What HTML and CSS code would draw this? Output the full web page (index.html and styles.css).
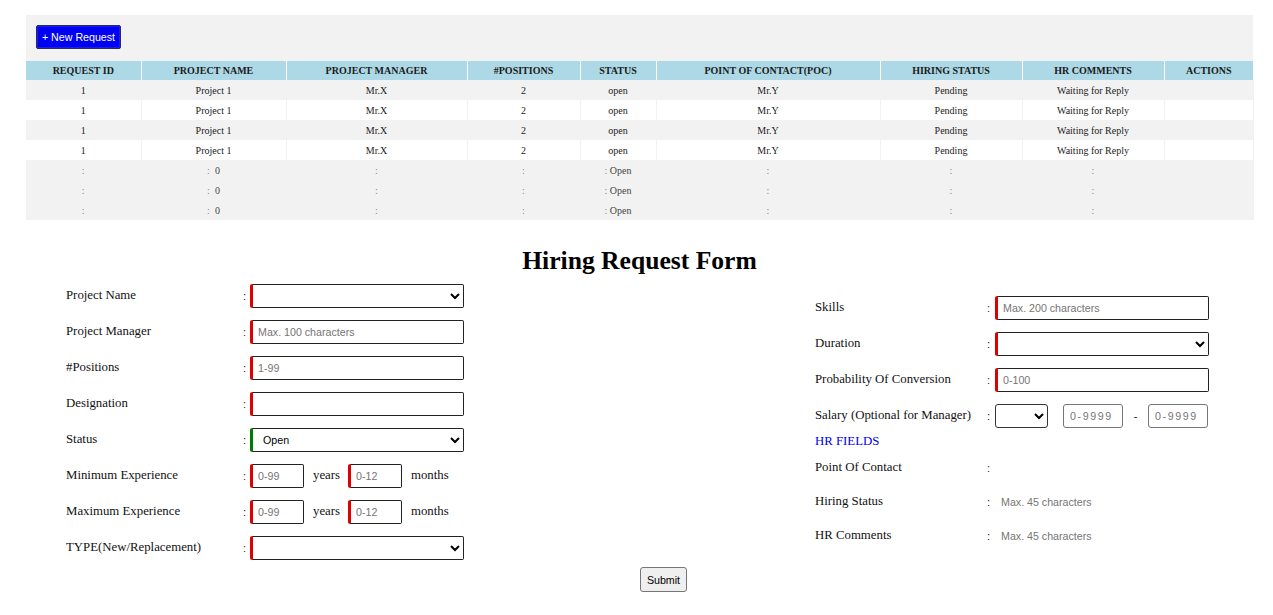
FILE: index.html
```html
<!DOCTYPE html>
<html>
<head>
<meta charset="utf-8">
<title>Hiring Request</title>
<link rel="stylesheet" href="styles.css">
</head>
<body>
<div class="page">
  <section class="panel">
    <button class="new-btn" type="button">+ New Request</button>
    <table class="grid">
      <colgroup>
        <col style="width:115px"><col style="width:145px"><col style="width:181px"><col style="width:113px"><col style="width:76px"><col style="width:224px"><col style="width:142px"><col style="width:142px"><col style="width:89px">
      </colgroup>
      <thead>
        <tr><th>REQUEST ID</th><th>PROJECT NAME</th><th>PROJECT MANAGER</th><th>#POSITIONS</th><th>STATUS</th><th>POINT OF CONTACT(POC)</th><th>HIRING STATUS</th><th>HR COMMENTS</th><th>ACTIONS</th></tr>
      </thead>
      <tbody>
        <tr><td>1</td><td>Project 1</td><td>Mr.X</td><td>2</td><td>open</td><td>Mr.Y</td><td>Pending</td><td>Waiting for Reply</td><td></td></tr>
        <tr><td>1</td><td>Project 1</td><td>Mr.X</td><td>2</td><td>open</td><td>Mr.Y</td><td>Pending</td><td>Waiting for Reply</td><td></td></tr>
        <tr><td>1</td><td>Project 1</td><td>Mr.X</td><td>2</td><td>open</td><td>Mr.Y</td><td>Pending</td><td>Waiting for Reply</td><td></td></tr>
        <tr><td>1</td><td>Project 1</td><td>Mr.X</td><td>2</td><td>open</td><td>Mr.Y</td><td>Pending</td><td>Waiting for Reply</td><td></td></tr>
        <tr class="tpl"><td><span class="c">:</span></td><td><span class="c">:</span>&nbsp; 0</td><td><span class="c">:</span></td><td><span class="c">:</span></td><td><span class="c">:</span> Open</td><td><span class="c">:</span></td><td><span class="c">:</span></td><td><span class="c">:</span></td><td></td></tr>
        <tr class="tpl"><td><span class="c">:</span></td><td><span class="c">:</span>&nbsp; 0</td><td><span class="c">:</span></td><td><span class="c">:</span></td><td><span class="c">:</span> Open</td><td><span class="c">:</span></td><td><span class="c">:</span></td><td><span class="c">:</span></td><td></td></tr>
        <tr class="tpl"><td><span class="c">:</span></td><td><span class="c">:</span>&nbsp; 0</td><td><span class="c">:</span></td><td><span class="c">:</span></td><td><span class="c">:</span> Open</td><td><span class="c">:</span></td><td><span class="c">:</span></td><td><span class="c">:</span></td><td></td></tr>
      </tbody>
    </table>
  </section>

  <h1 class="title">Hiring Request Form</h1>

  <form class="form">
    <div class="cols">
      <div class="col col-left">
        <div class="row"><span class="lbl">Project Name</span><span class="colon">:</span><select class="fld req"><option></option></select></div>
        <div class="row"><span class="lbl">Project Manager</span><span class="colon">:</span><input class="fld req" placeholder="Max. 100 characters"></div>
        <div class="row"><span class="lbl">#Positions</span><span class="colon">:</span><input class="fld req" placeholder="1-99"></div>
        <div class="row"><span class="lbl">Designation</span><span class="colon">:</span><input class="fld req"></div>
        <div class="row"><span class="lbl">Status</span><span class="colon">:</span><select class="fld ok"><option>Open</option></select></div>
        <div class="row"><span class="lbl">Minimum Experience</span><span class="colon">:</span>
          <span class="pair"><input class="fld req small" placeholder="0-99"><span class="unit">years</span><input class="fld req small" placeholder="0-12"><span class="unit">months</span></span></div>
        <div class="row"><span class="lbl">Maximum Experience</span><span class="colon">:</span>
          <span class="pair"><input class="fld req small" placeholder="0-99"><span class="unit">years</span><input class="fld req small" placeholder="0-12"><span class="unit">months</span></span></div>
        <div class="row"><span class="lbl">TYPE(New/Replacement)</span><span class="colon">:</span><select class="fld req"><option></option></select></div>
      </div>

      <div class="col col-right">
        <div class="row"><span class="lbl lbl-r">Skills</span><span class="colon">:</span><input class="fld req" placeholder="Max. 200 characters"></div>
        <div class="row"><span class="lbl lbl-r">Duration</span><span class="colon">:</span><select class="fld req"><option></option></select></div>
        <div class="row"><span class="lbl lbl-r">Probability Of Conversion</span><span class="colon">:</span><input class="fld req" placeholder="0-100"></div>
        <div class="row"><span class="lbl lbl-r">Salary (Optional for Manager)</span><span class="colon">:</span>
          <span class="salary"><select class="sal-sel"><option></option></select><input class="sal-in" placeholder="0-99999"><span class="dash">-</span><input class="sal-in" placeholder="0-99999"></span></div>
        <div class="hr-title">HR FIELDS</div>
        <div class="row hr"><span class="lbl lbl-r">Point Of Contact</span><span class="colon">:</span><span class="val"></span></div>
        <div class="row hr"><span class="lbl lbl-r">Hiring Status</span><span class="colon">:</span><span class="val">Max. 45 characters</span></div>
        <div class="row hr"><span class="lbl lbl-r">HR Comments</span><span class="colon">:</span><span class="val">Max. 45 characters</span></div>
      </div>
    </div>
    <div class="actions"><button class="submit" type="button">Submit</button></div>
  </form>
</div>
</body>
</html>
```

FILE: styles.css
```css
* { box-sizing: border-box; }
html, body { margin: 0; padding: 0; background: #fff; }
body {
  font-family: "Liberation Serif", "Times New Roman", serif;
  color: #111;
}
.page {
  width: 1227px;
  margin: 15px 0 0 26px;
}
.panel {
  background: #f2f2f2;
  padding: 10px 0 0 0;
}
.new-btn {
  display: block;
  margin-left: 10px;
  height: 24px;
  width: 85px;
  padding: 0;
  background: #0000f2;
  color: #fff;
  border: 1px solid #2a2a4a;
  border-radius: 2px;
  font-family: "Liberation Sans", Arial, sans-serif;
  font-size: 10.67px;
  box-shadow: inset 0 0 0 1px #1a1aff;
}
.grid {
  margin-top: 12px;
  width: 100%;
  table-layout: fixed;
  border-collapse: collapse;
  font-size: 10px;
  color: #1a1a1a;
}
.grid th {
  background: #add8e6;
  height: 19px;
  padding: 0;
  font-weight: bold;
  font-size: 10px;
  border-right: 1px solid #fff;
  text-align: center;
}
.grid th:last-child { border-right: none; }
.grid td {
  height: 20px;
  padding: 0;
  text-align: center;
  border-right: 1px solid #f2f2f2;
}
.grid tbody tr:nth-child(odd) td { background: #f2f2f2; }
.grid tbody tr:nth-child(even) td { background: #fff; }
.grid tbody tr.tpl td { background: #f2f2f2; color: #444; }
.grid .c { color: #888; }

.title {
  margin: 26px 0 8px;
  font-size: 25.6px;
  line-height: 30px;
  font-weight: bold;
  text-align: center;
  color: #000;
}

.cols {
  display: flex;
  justify-content: space-between;
  align-items: center;
  padding: 0 44px 0 40px;
}
.col {
  display: flex;
  flex-direction: column;
  gap: 12px;
}
.row {
  display: flex;
  align-items: center;
  height: 24px;
  font-size: 12.8px;
}
.lbl {
  width: 177px;
  padding-bottom: 1px;
}
.lbl-r { width: 172px; }
.colon {
  width: 7px;
  font-family: "Liberation Sans", Arial, sans-serif;
  font-size: 11px;
  color: #222;
}
.col-right .colon { width: 8px; }
.fld {
  width: 214px;
  height: 24px;
  border: 1px solid #222;
  border-radius: 2px;
  background: #fff;
  font-family: "Liberation Sans", Arial, sans-serif;
  font-size: 10.67px;
  color: #000;
  padding: 0 5px;
  margin: 0;
  outline: none;
}
select.fld { padding: 0 4px 0 6px; }
.fld.req { border-left: 3px solid #e00000; }
.fld.ok { border-left: 3px solid #007a00; }
.fld::placeholder, .sal-in::placeholder { color: #757575; }
.pair { display: flex; align-items: center; }
.fld.small { width: 54px; }
.unit { margin: 0 8px 0 9px; padding-bottom: 1px; }

.salary { display: flex; align-items: center; }
.sal-sel {
  width: 53px;
  height: 24px;
  margin: 0;
  border: 1px solid #333;
  border-radius: 3px;
  background: #fff;
}
.sal-in {
  width: 60px;
  height: 24px;
  margin: 0 0 0 15px;
  padding: 0 10px 0 6px;
  border: 1px solid #777;
  border-radius: 3px;
  font-family: "Liberation Sans", Arial, sans-serif;
  font-size: 10.67px;
  letter-spacing: 1.6px;
  outline: none;
}
.dash {
  width: 25px;
  text-align: center;
  font-family: "Liberation Sans", Arial, sans-serif;
  font-size: 11px;
}
.dash + .sal-in { margin-left: 0; }

.hr-title {
  font-size: 12.8px;
  line-height: 15px;
  color: #0000ee;
  margin: -6px 0 -5px;
}
.col-right .row.hr + .row.hr { margin-top: -2px; }
.val {
  margin-left: 6px;
  font-family: "Liberation Sans", Arial, sans-serif;
  font-size: 10.67px;
  color: #757575;
}

.actions {
  display: flex;
  justify-content: center;
  padding-left: 48px;
  margin-top: 7px;
}
.submit {
  height: 25px;
  width: 47px;
  padding: 0;
  font-family: "Liberation Sans", Arial, sans-serif;
  font-size: 10.67px;
  color: #000;
  background: #efefef;
  border: 1px solid #767676;
  border-radius: 3px;
}
```
